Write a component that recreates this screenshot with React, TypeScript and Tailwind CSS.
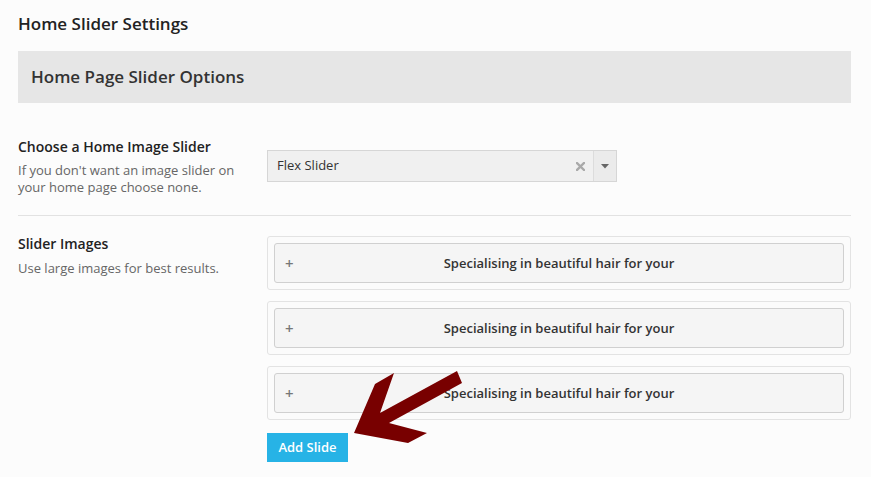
import React from "react";

function SlideRow() {
  return (
    <div className="rounded-[3px] border border-[#e3e3e3] bg-[#fbfbfb] p-[6px]">
      <div className="relative flex h-[40px] items-center justify-center rounded-[3px] border border-[#d0d0d0] bg-[#f5f5f5] pt-[2px]">
        <span className="absolute left-[10px] top-[8px] text-[15px] font-semibold text-[#777]">+</span>
        <span className="text-[13px] font-semibold text-[#333]">Specialising in beautiful hair for your</span>
      </div>
    </div>
  );
}

export default function App() {
  return (
    <div
      className="relative h-[477px] w-[871px] overflow-hidden bg-[#fcfcfc] pl-[18px] pr-[20px]"
      style={{ fontFamily: '"Open Sans", "Noto Sans", sans-serif' }}
    >
      <h1 className="pt-[12px] text-[17px] font-semibold leading-[24px] text-[#222]">Home Slider Settings</h1>
      <div className="mt-[15px] flex h-[52px] items-center bg-[#e6e6e6] pl-[13px]">
        <h2 className="text-[17px] font-semibold text-[#333]">Home Page Slider Options</h2>
      </div>

      <div className="mt-[34px] flex">
        <div className="w-[249px]">
          <div className="text-[14px] font-semibold leading-[20px] text-[#222]">Choose a Home Image Slider</div>
          <div className="mt-[5px] text-[13px] leading-[17px] text-[#666]">
            <div>If you don't want an image slider on</div>
            <div>your home page choose none.</div>
          </div>
        </div>
        <div className="mt-[13px] flex h-[32px] w-[350px] border border-[#d6d6d6] bg-[#f0f0f0]">
          <div className="flex flex-1 items-center pl-[9px] text-[13px] text-[#333]">Flex Slider</div>
          <div className="flex w-[26px] items-center justify-center">
            <svg width="9" height="9" viewBox="0 0 9 9">
              <path d="M1 1 L8 8 M8 1 L1 8" stroke="#a9a9a9" strokeWidth="2.4" strokeLinecap="square" />
            </svg>
          </div>
          <div className="flex w-[23px] items-center justify-center border-l border-[#dcdcdc] bg-[#ebebeb]">
            <svg width="8" height="5" viewBox="0 0 8 5">
              <path d="M0 0 L8 0 L4 4.5 Z" fill="#666" />
            </svg>
          </div>
        </div>
      </div>

      <div className="mt-[19px] h-px bg-[#e2e2e2]" />

      <div className="mt-[18px] flex">
        <div className="w-[249px]">
          <div className="text-[14px] font-semibold leading-[20px] text-[#222]">Slider Images</div>
          <div className="mt-[6px] text-[13px] leading-[16px] text-[#666]">Use large images for best results.</div>
        </div>
        <div className="mt-[2px] flex flex-1 flex-col">
          <div className="flex flex-col gap-[11px]">
            <SlideRow />
            <SlideRow />
            <SlideRow />
          </div>
          <div className="mt-[13px]">
            <button className="h-[29px] w-[81px] bg-[#27b3e6] text-[13px] font-semibold text-white">Add Slide</button>
          </div>
        </div>
      </div>

      <svg className="absolute left-0 top-0" width="871" height="477" viewBox="0 0 871 477">
        <polygon
          points="354,433 375,384 394,373 380,413 457,371 462,383 389,423 427,433 408,443"
          fill="#780000"
        />
      </svg>
    </div>
  );
}
